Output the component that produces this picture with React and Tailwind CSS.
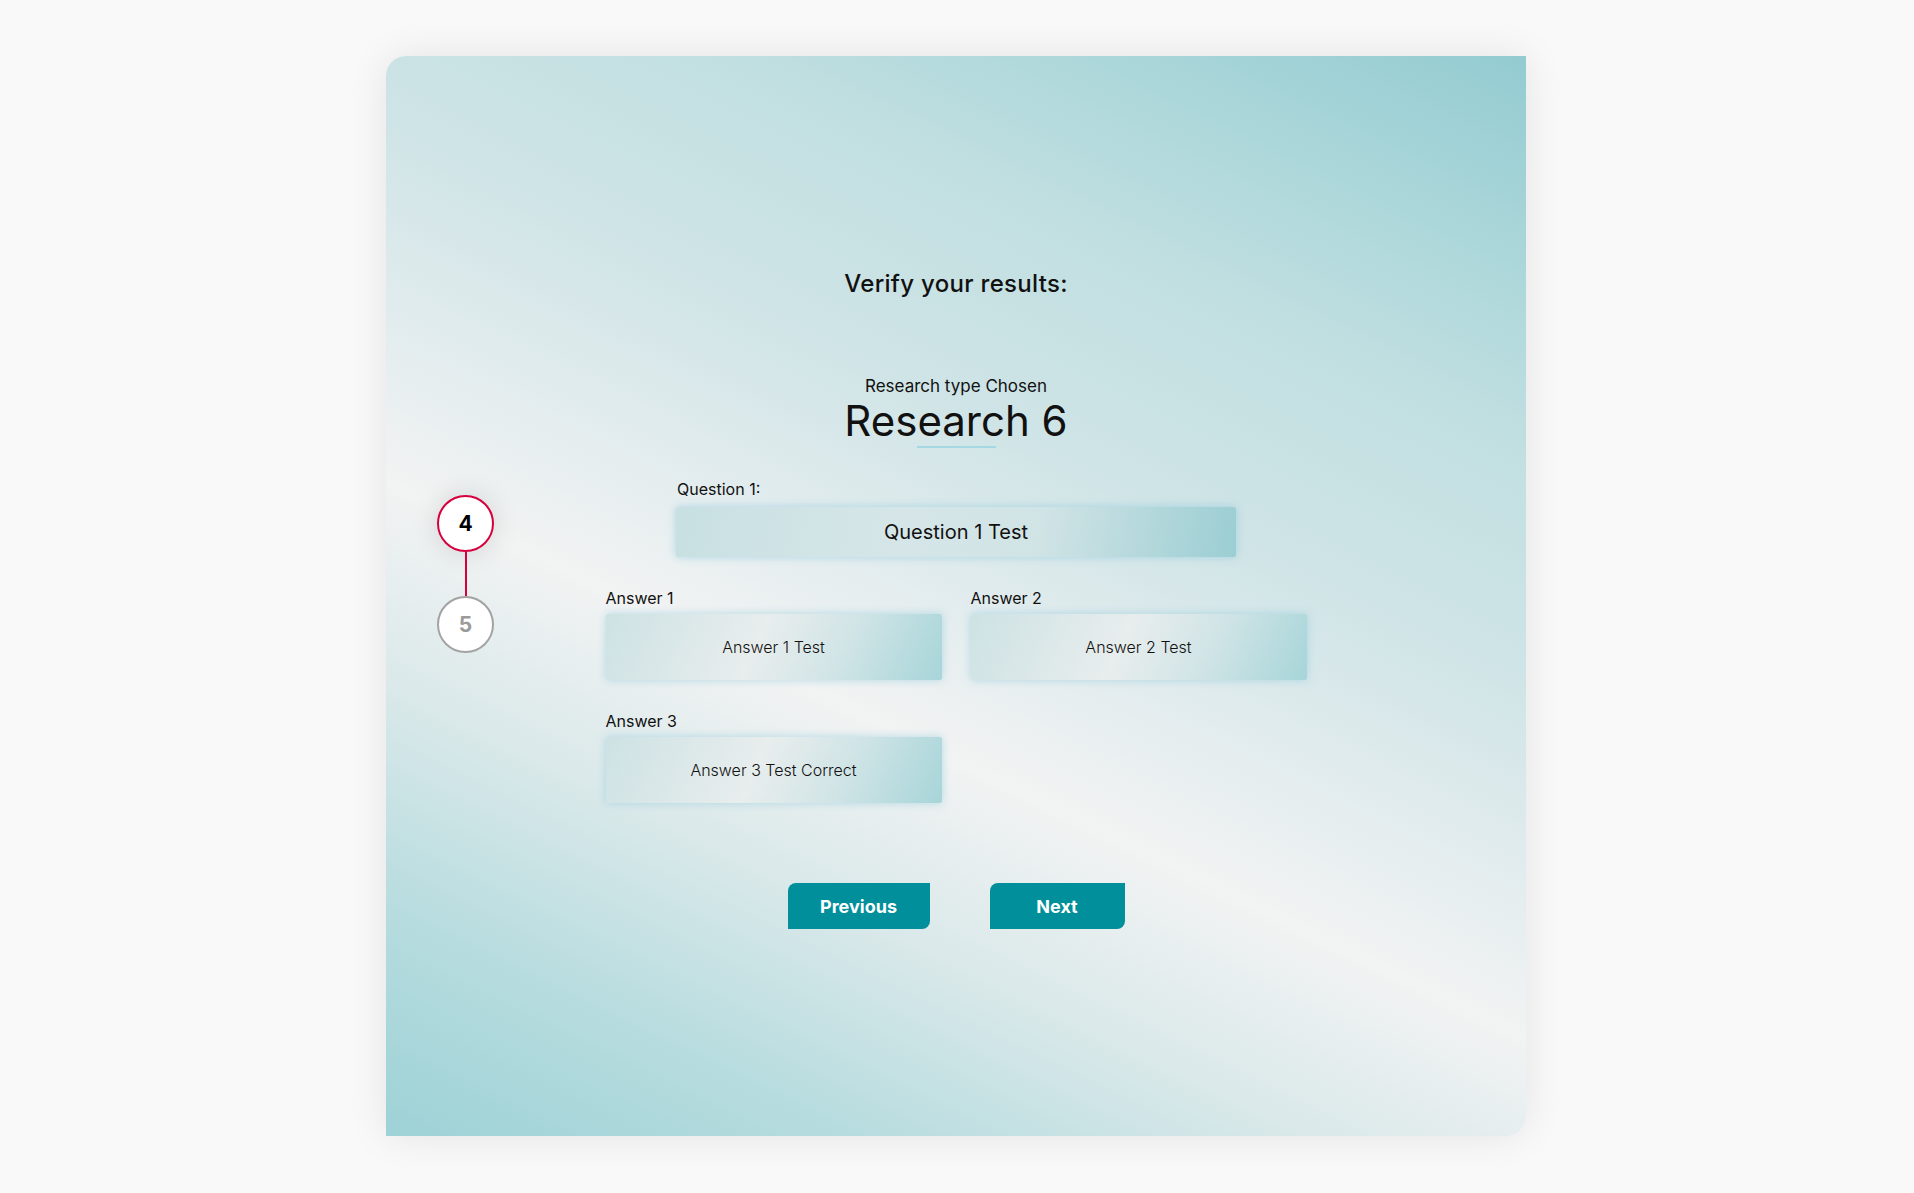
import React from 'react';

const answers = [
  { label: 'Answer 1', value: 'Answer 1 Test' },
  { label: 'Answer 2', value: 'Answer 2 Test' },
  { label: 'Answer 3', value: 'Answer 3 Test Correct' },
];

const Stepper = () => (
  <div className="flex flex-col items-center mt-[439px]">
    <div className="w-[57px] h-[57px] rounded-full bg-white border-2 border-[#d7003f] flex items-center justify-center shadow-[0_0_28px_rgba(0,0,0,0.13)]">
      <span className="text-[21px] font-bold text-black">4</span>
    </div>
    <div className="w-[2px] h-[44px] bg-[#d7003f]" />
    <div className="w-[57px] h-[57px] rounded-full bg-white border-2 border-[#a3a3a3] flex items-center justify-center">
      <span className="text-[21px] font-bold text-[#9b9b9b]">5</span>
    </div>
  </div>
);

export default function App() {
  return (
    <div className="min-h-screen bg-[#f9f9f9] font-['Inter','Noto_Sans',sans-serif] text-[#111] pt-[56px] pb-[57px] pr-[2px]">
      <div className="mx-auto w-[1140px] h-[1080px] rounded-tl-[20px] rounded-br-[20px] bg-[linear-gradient(26deg,#9dd2d6_0%,#b7dcdf_14%,#dbe9ea_28%,#f2f3f3_40%,#e2ecee_50%,#cfe4e6_62%,#c1dfe1_76%,#aad6d9_88%,#93cbd1_100%)] shadow-[0_0_40px_rgba(0,0,0,0.09)] flex px-[51px]">
        <div className="w-[57px] shrink-0">
          <Stepper />
        </div>

        <div className="flex-1 flex flex-col items-center pt-[212px]">
          <h2 className="text-[24px] leading-[32px] font-medium tracking-[0.3px]">Verify your results:</h2>

          <p className="mt-[75px] text-[17px] leading-[22px]">Research type Chosen</p>
          <h1 className="text-[42px] leading-[48px] font-normal">Research 6</h1>
          <div className="mt-[1px] w-[79px] h-[2px] bg-[#a6d8e3]" />

          <div className="mt-[31px] w-[560px]">
            <p className="text-[16px] leading-[20px] pl-[1px]">Question 1:</p>
            <div className="mt-[8px] h-[50px] rounded-[2px] bg-[linear-gradient(100deg,#c8e0e2_0%,#d6e6e8_40%,#d0e3e5_65%,#9bced3_100%)] shadow-[0_0_9px_rgba(140,200,222,0.65)] flex items-center justify-center">
              <span className="text-[20px]">Question 1 Test</span>
            </div>
          </div>

          <div className="mt-[31px] grid grid-cols-[336px_336px] gap-x-[29px] gap-y-[31px]">
            {answers.map((a) => (
              <div key={a.label}>
                <p className="text-[16px] leading-[20px]">{a.label}</p>
                <div className="mt-[6px] h-[66px] rounded-[2px] bg-[linear-gradient(115deg,#cde2e4_0%,#e8eded_45%,#d0e4e6_70%,#a7d5d9_100%)] shadow-[0_0_9px_rgba(140,200,222,0.6)] flex items-center justify-center">
                  <span className="text-[16px] font-light">{a.value}</span>
                </div>
              </div>
            ))}
          </div>

          <div className="mt-[80px] flex gap-[60px]">
            <button className="w-[142px] h-[46px] bg-[#008f9b] text-white text-[18px] font-bold rounded-tl-[8px] rounded-br-[8px]">Previous</button>
            <button className="w-[135px] h-[46px] bg-[#008f9b] text-white text-[18px] font-bold rounded-tl-[8px] rounded-br-[8px]">Next</button>
          </div>
        </div>

        <div className="w-[57px] shrink-0" />
      </div>
    </div>
  );
}
